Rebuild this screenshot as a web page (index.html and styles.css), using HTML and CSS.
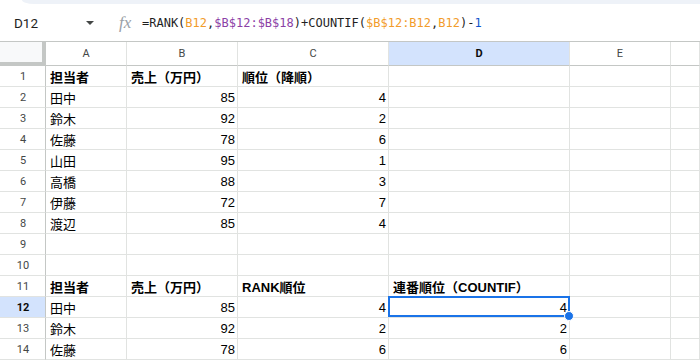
FILE: index.html
```html
<!DOCTYPE html>
<html lang="ja">
<head>
<meta charset="utf-8">
<link rel="stylesheet" href="styles.css">
</head>
<body>
<div class="app">
  <div class="topstrip"><div class="toolbar-edge"></div></div>
  <div class="fbar">
    <div class="namebox">D12</div>
    <div class="caret"></div>
    <div class="fx">fx</div>
    <div class="formula">=RANK(<span class="o">B12</span>,<span class="p">$B$12:$B$18</span>)+COUNTIF(<span class="o">$B$12:B12</span>,<span class="o">B12</span>)-<span class="num">1</span></div>
  </div>
  <div class="sheet">
    <div class="corner"></div><div class="ch">A</div><div class="ch">B</div><div class="ch">C</div><div class="ch hl">D</div><div class="ch">E</div><div class="ch"></div>

    <div class="rh">1</div><div class="c b">担当者</div><div class="c b">売上（万円）</div><div class="c b">順位（降順）</div><div class="c"></div><div class="c"></div><div class="c"></div>
    <div class="rh">2</div><div class="c">田中</div><div class="c n">85</div><div class="c n">4</div><div class="c"></div><div class="c"></div><div class="c"></div>
    <div class="rh">3</div><div class="c">鈴木</div><div class="c n">92</div><div class="c n">2</div><div class="c"></div><div class="c"></div><div class="c"></div>
    <div class="rh">4</div><div class="c">佐藤</div><div class="c n">78</div><div class="c n">6</div><div class="c"></div><div class="c"></div><div class="c"></div>
    <div class="rh">5</div><div class="c">山田</div><div class="c n">95</div><div class="c n">1</div><div class="c"></div><div class="c"></div><div class="c"></div>
    <div class="rh">6</div><div class="c">高橋</div><div class="c n">88</div><div class="c n">3</div><div class="c"></div><div class="c"></div><div class="c"></div>
    <div class="rh">7</div><div class="c">伊藤</div><div class="c n">72</div><div class="c n">7</div><div class="c"></div><div class="c"></div><div class="c"></div>
    <div class="rh">8</div><div class="c">渡辺</div><div class="c n">85</div><div class="c n">4</div><div class="c"></div><div class="c"></div><div class="c"></div>
    <div class="rh">9</div><div class="c"></div><div class="c"></div><div class="c"></div><div class="c"></div><div class="c"></div><div class="c"></div>
    <div class="rh">10</div><div class="c"></div><div class="c"></div><div class="c"></div><div class="c"></div><div class="c"></div><div class="c"></div>
    <div class="rh">11</div><div class="c b">担当者</div><div class="c b">売上（万円）</div><div class="c b">RANK順位</div><div class="c b">連番順位（COUNTIF）</div><div class="c"></div><div class="c"></div>
    <div class="rh hl">12</div><div class="c">田中</div><div class="c n">85</div><div class="c n">4</div><div class="c n active">4<div class="sel"><div class="handle"></div></div></div><div class="c"></div><div class="c"></div>
    <div class="rh">13</div><div class="c">鈴木</div><div class="c n">92</div><div class="c n">2</div><div class="c n">2</div><div class="c"></div><div class="c"></div>
    <div class="rh">14</div><div class="c">佐藤</div><div class="c n">78</div><div class="c n">6</div><div class="c n">6</div><div class="c"></div><div class="c"></div>
  </div>
</div>
</body>
</html>
```

FILE: styles.css
```css
* { box-sizing: border-box; }
html, body { margin: 0; padding: 0; background: #fff; }
body { width: 700px; height: 360px; overflow: hidden; }
.app { width: 700px; height: 360px; overflow: hidden; }

.topstrip { height: 5px; padding-left: 22px; }
.toolbar-edge {
  height: 4px;
  background: #eef2f8;
  border-bottom-left-radius: 12px 4px;
}

.fbar {
  height: 37px;
  border-bottom: 1px solid #c4c7c5;
  display: flex;
  align-items: center;
  padding-bottom: 1px;
}
.namebox {
  width: 86px;
  padding-left: 14px;
  font-family: Roboto, "Liberation Sans", sans-serif;
  font-size: 13.5px;
  color: #1f1f1f;
}
.caret {
  width: 0; height: 0;
  border-left: 4px solid transparent;
  border-right: 4px solid transparent;
  border-top: 4px solid #444746;
  margin-top: 1px;
}
.fx {
  margin-left: 25px;
  width: 22px;
  font-family: "Liberation Serif", serif;
  font-style: italic;
  font-size: 17px;
  color: #9aa0a6;
  line-height: 1;
}
.formula {
  margin-left: 1px;
  font-family: "DejaVu Sans Mono", "Liberation Mono", monospace;
  font-size: 12px;
  color: #1f1f1f;
  white-space: nowrap;
}
.formula .o { color: #f29c2b; }
.formula .p { color: #8b3fa6; }
.formula .num { color: #1155cc; }

.sheet {
  display: grid;
  grid-template-columns: 46px 81px 111px 151px 181px 101px 1fr;
  grid-template-rows: 24px;
  grid-auto-rows: 21px;
}
.corner {
  background: #f8f9fa;
  border-right: 4px solid #c4c7c5;
  border-bottom: 4px solid #c4c7c5;
}
.ch {
  border-right: 1px solid #e1e3e1;
  border-bottom: 1px solid #c4c7c5;
  display: flex;
  align-items: center;
  justify-content: center;
  font-family: Roboto, "Liberation Sans", sans-serif;
  font-size: 11px;
  color: #444746;
}
.rh {
  border-right: 1px solid #c4c7c5;
  border-bottom: 1px solid #e1e3e1;
  display: flex;
  align-items: center;
  justify-content: center;
  font-family: Roboto, "Liberation Sans", sans-serif;
  font-size: 11px;
  color: #444746;
  padding-left: 1px;
}
.ch.hl, .rh.hl {
  background: #d3e3fd;
  color: #0b0b0b;
  font-weight: bold;
}
.c {
  border-right: 1px solid #e1e3e1;
  border-bottom: 1px solid #e1e3e1;
  display: flex;
  align-items: center;
  padding: 1px 3px 0 4px;
  font-family: "Liberation Sans", "Noto Sans CJK JP", sans-serif;
  font-size: 13px;
  color: #000;
  white-space: nowrap;
  overflow: visible;
}
.c.b { font-weight: bold; }
.c.n { justify-content: flex-end; padding-right: 2px; }

.active { position: relative; }
.sel {
  position: absolute;
  left: -1px; top: -1px; right: -1px; bottom: 0;
  border: 2px solid #1a73e8;
  pointer-events: none;
}
.handle {
  position: absolute;
  right: -6px; bottom: -6px;
  width: 10px; height: 10px;
  border-radius: 50%;
  background: #1a73e8;
  border: 1px solid #fff;
}
```
